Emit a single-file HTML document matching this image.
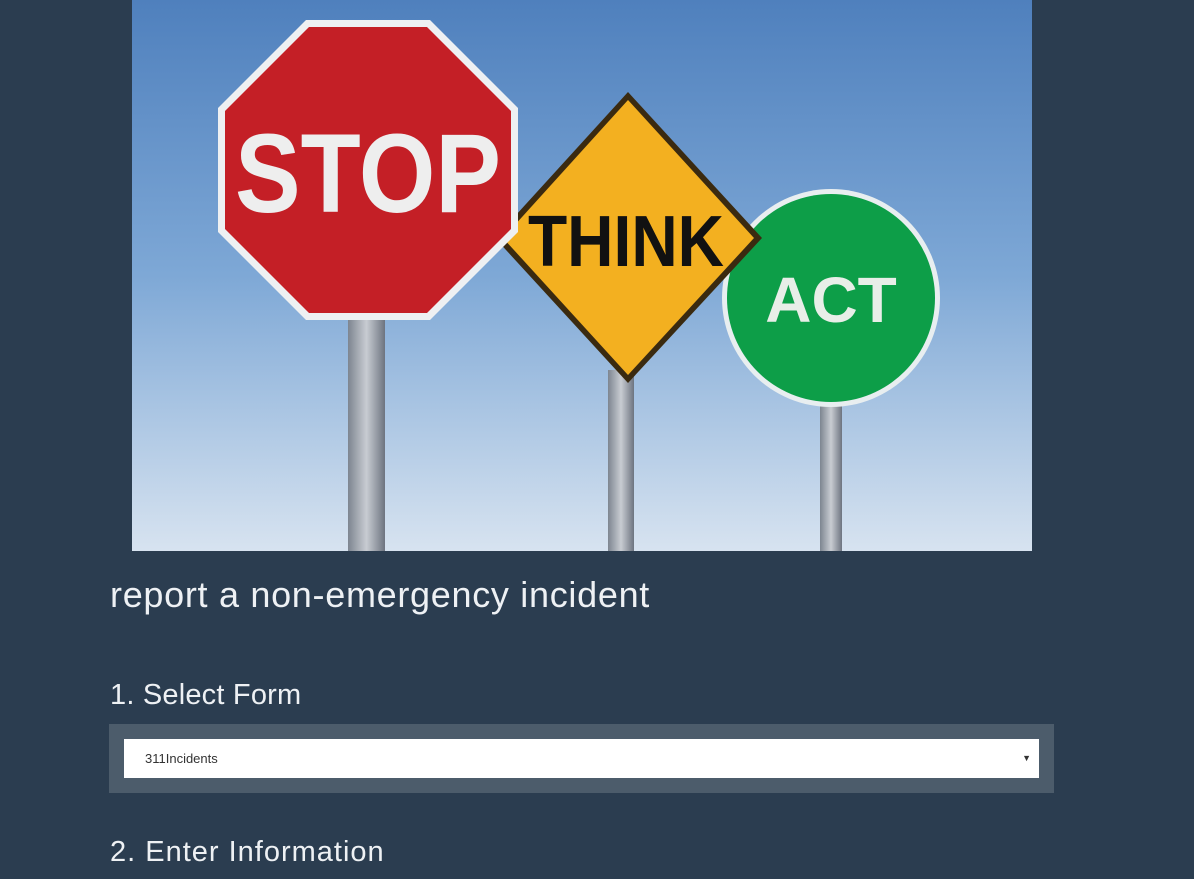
<!DOCTYPE html>
<html><head><style>
body{margin:0;background:#2b3d50;width:1194px;height:879px;overflow:hidden;font-family:"Liberation Sans",sans-serif;color:#eef1f4}
svg{position:absolute;left:132px;top:0}
.h1{position:absolute;left:110px;top:574px;font-size:36px;font-weight:300;letter-spacing:0.7px}
.h2{position:absolute;left:110px;font-size:29px;font-weight:300}
.panel{position:absolute;left:109px;top:724px;width:945px;height:69px;background:#4c5c6b}
.sel{position:absolute;left:15px;top:15px;width:915px;height:39px;background:#fff;color:#333;font-size:13px;line-height:39px;text-indent:21px}
.sel span{position:absolute;right:8px;top:0;font-size:9px}
</style></head><body>
<svg width="900" height="551" viewBox="132 0 900 551">
<defs><linearGradient id="sky" x1="0" y1="0" x2="0" y2="1"><stop offset="0" stop-color="#4f80bd"/><stop offset="0.5" stop-color="#7ea8d6"/><stop offset="1" stop-color="#d7e3f0"/></linearGradient>
<linearGradient id="pole" x1="0" x2="1"><stop offset="0" stop-color="#7d8590"/><stop offset="0.5" stop-color="#c8ccd2"/><stop offset="1" stop-color="#6d7480"/></linearGradient></defs>
<rect x="132" y="0" width="900" height="551" fill="url(#sky)"/>
<rect x="348" y="315" width="37" height="236" fill="url(#pole)"/>
<rect x="608" y="370" width="26" height="181" fill="url(#pole)"/>
<rect x="820" y="400" width="22" height="151" fill="url(#pole)"/>
<circle cx="831" cy="298" r="109" fill="#e8eef0"/>
<circle cx="831" cy="298" r="104" fill="#0d9e48"/>
<text x="831" y="322" text-anchor="middle" font-family="Liberation Sans" font-weight="bold" font-size="64" fill="#e8eee8">ACT</text>
<polygon points="628,92 762,238 628,383 495,238" fill="#3a2a10"/>
<polygon points="628,100 754,238 628,375 503,238" fill="#f3b020"/>
<text x="626" y="266" text-anchor="middle" font-family="Liberation Sans" font-weight="bold" font-size="72" fill="#111" textLength="196" lengthAdjust="spacingAndGlyphs">THINK</text>
<polygon points="306,20 430,20 518,108 518,232 430,320 306,320 218,232 218,108" fill="#eef0f2"/>
<polygon points="309,27 427,27 511,111 511,229 427,313 309,313 225,229 225,111" fill="#c41f26"/>
<text x="368" y="212" text-anchor="middle" font-family="Liberation Sans" font-weight="bold" font-size="112" fill="#eee" textLength="266" lengthAdjust="spacingAndGlyphs">STOP</text>
</svg>
<div class="h1">report a non-emergency incident</div>
<div class="h2" style="top:679px;letter-spacing:0.2px">1. Select Form</div>
<div class="panel"><div class="sel">311Incidents<span>▼</span></div></div>
<div class="h2" style="top:836px;letter-spacing:1px">2. Enter Information</div>
</body></html>
